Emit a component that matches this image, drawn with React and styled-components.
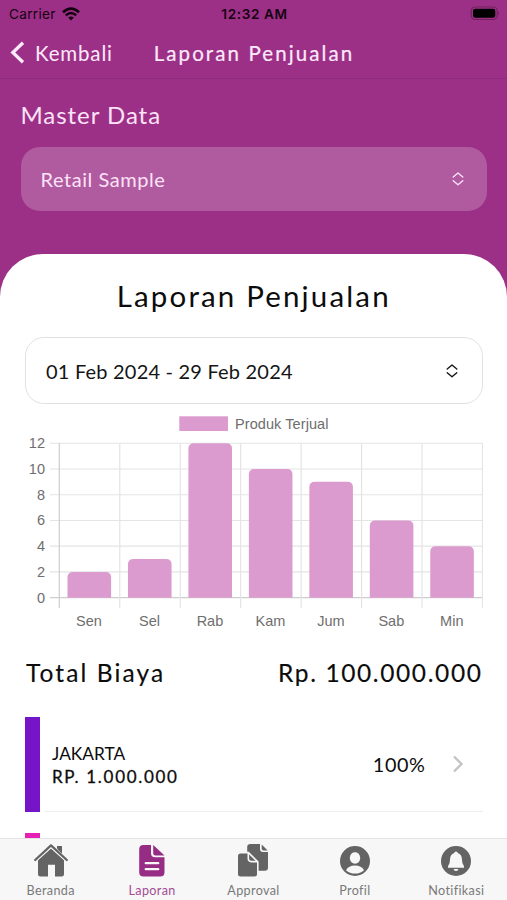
import React from "react";
import styled, { createGlobalStyle } from "styled-components";

const GlobalStyle = createGlobalStyle`
  * {
    box-sizing: border-box;
  }
  body {
    margin: 0;
    background: #9c3087;
    font-family: Lato, "Open Sans", sans-serif;
  }
`;

const Screen = styled.div`
  display: flex;
  flex-direction: column;
  width: 507px;
  height: 900px;
  overflow: hidden;
  background: #9c3087;
`;

const StatusBar = styled.div`
  display: grid;
  grid-template-columns: 1fr auto 1fr;
  align-items: center;
  height: 27px;
  padding: 0 7px 0 9px;
  font-family: Inter, sans-serif;
  font-size: 13.6px;
  color: #16020f;
`;

const Carrier = styled.div`
  display: flex;
  align-items: center;
  gap: 6px;
  letter-spacing: 0.3px;
`;

const Clock = styled.div`
  font-weight: 600;
  letter-spacing: 0.6px;
`;

const BatteryIcon = styled.svg`
  justify-self: end;
`;

const NavBar = styled.div`
  display: grid;
  grid-template-columns: 1fr auto 1fr;
  align-items: center;
  height: 52px;
  padding: 0 9px 0 10px;
  border-bottom: 1px solid #8e2b7b;
  color: #fde9fa;
`;

const BackButton = styled.div`
  display: flex;
  align-items: center;
  gap: 10px;
  font-size: 20.5px;
  letter-spacing: 0.85px;
`;

const NavTitle = styled.div`
  font-size: 20.5px;
  letter-spacing: 2.1px;
  -webkit-text-stroke: 0.2px currentColor;
`;

const MasterSection = styled.div`
  height: 174.5px;
  padding: 19px 20px 0 20.5px;
  color: #fde3f8;
`;

const SectionLabel = styled.div`
  height: 48.5px;
  line-height: 33px;
  font-size: 24px;
  letter-spacing: 0.95px;
`;

const Select = styled.div`
  display: flex;
  flex: none;
  align-items: center;
  justify-content: space-between;
  height: ${(p) => (p.$outlined ? "67px" : "64.5px")};
  padding: 0 ${(p) => (p.$outlined ? "23px" : "22px")} 0 20px;
  border-radius: 19px;
  border: ${(p) => (p.$outlined ? "1.5px solid #e1e1e1" : "0")};
  background: ${(p) => (p.$outlined ? "#fff" : "#b05a9f")};
  color: ${(p) => (p.$outlined ? "#151515" : "#fde3f8")};
  font-size: 20px;
  letter-spacing: ${(p) => (p.$outlined ? "0.2px" : "0.55px")};
`;

const Sheet = styled.div`
  display: flex;
  flex-direction: column;
  flex: 1;
  min-height: 0;
  overflow: hidden;
  padding: 0 24.5px 0 25px;
  border-radius: 43px 43px 0 0;
  background: #fff;
  color: #0c0c0c;
`;

const SheetTitle = styled.h1`
  flex: none;
  height: 83.5px;
  margin: 0;
  line-height: 84px;
  text-align: center;
  font-size: 29.5px;
  font-weight: 400;
  letter-spacing: 2.15px;
`;

const Chart = styled.svg`
  flex: none;
  display: block;
  font-family: "Liberation Sans", sans-serif;
  font-size: 14.5px;
  fill: #6e6e6e;
`;

const TotalRow = styled.div`
  display: flex;
  flex: none;
  justify-content: space-between;
  height: 73.5px;
  padding-left: 1px;
  line-height: 59px;
  font-size: 24.5px;
  letter-spacing: 1.6px;
  -webkit-text-stroke: 0.15px currentColor;
`;

const TotalLabel = styled.span`
  letter-spacing: 2.1px;
`;

const CostItem = styled.div`
  display: flex;
  flex: none;
  gap: 4px;
  height: 95.5px;
  margin-bottom: 21px;
`;

const CostBar = styled.div`
  width: 15px;
  background: ${(p) => p.$color};
`;

const CostBody = styled.div`
  display: flex;
  flex: 1;
  align-items: center;
  padding: 1px 19px 0 8px;
  border-bottom: 1.5px solid #eee;
`;

const CostText = styled.div`
  flex: 1;
  padding-top: 2px;
  font-size: 17.3px;
  line-height: 23px;
`;

const CostAmount = styled.div`
  font-size: 17px;
  letter-spacing: 1.7px;
  -webkit-text-stroke: 0.3px currentColor;
`;

const Percent = styled.div`
  margin-right: 26px;
  font-size: 19.8px;
  letter-spacing: 0.6px;
`;

const TabBar = styled.div`
  display: grid;
  flex: none;
  grid-template-columns: repeat(5, 1fr);
  height: 62px;
  border-top: 1px solid #e4e4e4;
  background: #f7f7f7;
`;

const Tab = styled.div`
  display: flex;
  flex-direction: column;
  align-items: center;
  padding-top: 3px;
  color: ${(p) => (p.$active ? "#972c84" : "#646464")};
`;

const TabLabel = styled.span`
  margin-top: 3.5px;
  line-height: 17px;
  font-size: 12.6px;
  letter-spacing: 0.35px;
  opacity: 0.85;
`;

const days = [
  { name: "Sen", value: 2 },
  { name: "Sel", value: 3 },
  { name: "Rab", value: 12 },
  { name: "Kam", value: 10 },
  { name: "Jum", value: 9 },
  { name: "Sab", value: 6 },
  { name: "Min", value: 4 },
];

const ticks = [0, 2, 4, 6, 8, 10, 12];
const CHART_LEFT = 34.3;
const CHART_RIGHT = 457.5;
const BASELINE = 193.7;
const UNIT = 12.87;
const STEP = (CHART_RIGHT - CHART_LEFT) / 7;

function barPath(index, value) {
  const x = CHART_LEFT + STEP * index + 8.2;
  const top = BASELINE - value * UNIT;
  const w = 43.6;
  const r = 5.5;
  return `M${x} ${BASELINE}V${top + r}q0 ${-r} ${r} ${-r}h${w - r * 2}q${r} 0 ${r} ${r}V${BASELINE}z`;
}

function SalesChart() {
  return (
    <Chart width="458" height="239" viewBox="0 0 458 239">
      <rect x="154.3" y="12.3" width="48.7" height="14.7" fill="#db9bce" />
      <text x="210" y="24.5" textLength="93.5">
        Produk Terjual
      </text>
      {ticks.map((tick) => {
        const y = BASELINE - tick * UNIT;
        return (
          <g key={tick}>
            <path
              d={`M25 ${y}H${CHART_RIGHT}`}
              stroke={tick === 0 ? "#cdcdcd" : "#e4e4e4"}
              strokeWidth="1.2"
            />
            <text x="20" y={y + 5} textAnchor="end">
              {tick}
            </text>
          </g>
        );
      })}
      {[0, 1, 2, 3, 4, 5, 6, 7].map((i) => (
        <path
          key={i}
          d={`M${CHART_LEFT + STEP * i} 39V204`}
          stroke={i === 0 ? "#cdcdcd" : "#e4e4e4"}
          strokeWidth="1.2"
        />
      ))}
      {days.map((day, i) => (
        <g key={day.name}>
          <path d={barPath(i, day.value)} fill="#db9bce" />
          <text x={CHART_LEFT + STEP * (i + 0.5) - 0.5} y="221.5" textAnchor="middle">
            {day.name}
          </text>
        </g>
      ))}
    </Chart>
  );
}

function WifiIcon() {
  return (
    <svg width="18" height="14" viewBox="0 0 18 14" fill="none" stroke="currentColor">
      <path d="M1 5.2Q9-2.1 17 5.2" strokeWidth="2.6" />
      <path d="M3.8 8.3Q9 3.6 14.2 8.3" strokeWidth="2.4" />
      <path d="M6.1 10.6Q9 8.3 11.9 10.6L9 13.5z" fill="currentColor" stroke="none" />
    </svg>
  );
}

function SelectorIcon() {
  return (
    <svg width="14" height="16" viewBox="0 0 14 16" fill="none" stroke="currentColor" strokeWidth="1.4" strokeLinecap="round" strokeLinejoin="round">
      <path d="M2.2 6L7 2l4.8 4M2.2 9.8L7 13.8l4.8-4" />
    </svg>
  );
}

function HomeIcon() {
  return (
    <svg width="36" height="36" viewBox="0 0 36 36" fill="currentColor">
      <path d="M24 4h5v10.5L24 10z" />
      <path d="M18 6.4l13 11.5v14.3q0 2.3-2.3 2.3H22V22.7h-7v11.8H7.3Q5 34.5 5 32.2V17.9z" />
      <path d="M2.2 18L18 3.4 33.8 18" fill="none" stroke="#f7f7f7" strokeWidth="4.2" />
      <path d="M24.6 4H29v7.6l-4.4-4z" />
      <path d="M2.2 18L18 3.4 33.8 18" fill="none" stroke="currentColor" strokeWidth="2.3" strokeLinecap="round" strokeLinejoin="round" />
    </svg>
  );
}

function ReportIcon() {
  return (
    <svg width="36" height="36" viewBox="0 0 36 36" fill="currentColor">
      <path d="M9.5 3H17v8.2q0 4 4 4h9.5v15q0 4.3-4.3 4.3H9.5q-4.3 0-4.3-4.3V7.3Q5.2 3 9.5 3z" />
      <path d="M19.2 3l11.3 10.5h-8.8q-2.5 0-2.5-2.5z" />
      <path d="M11.7 21.2h12.6M11.7 27.2h12.6" fill="none" stroke="#f7f7f7" strokeWidth="2.2" strokeLinecap="round" />
    </svg>
  );
}

function ApprovalIcon() {
  return (
    <svg width="36" height="36" viewBox="0 0 36 36" fill="currentColor">
      <path d="M15.5 2H25v5q0 3 3 3h5v15.5q0 3.3-3.3 3.3H15.5q-3.3 0-3.3-3.3V5.3Q12.2 2 15.5 2z" />
      <path d="M26.7 2.4l6 6h-4q-2 0-2-2z" />
      <path d="M5.5 10.6h8l9.3 9.3v12.2q0 3.3-3.3 3.3h-14q-3.3 0-3.3-3.3V13.9q0-3.3 3.3-3.3z" stroke="#f7f7f7" strokeWidth="1.6" />
      <path d="M13.3 10.8v5.8q0 3 3 3h6" fill="none" stroke="#f7f7f7" strokeWidth="1.6" />
    </svg>
  );
}

function ProfileIcon() {
  return (
    <svg width="36" height="36" viewBox="0 0 36 36" fill="currentColor">
      <circle cx="18" cy="19" r="15" />
      <rect x="12.9" y="10.2" width="10.2" height="11.5" rx="5.1" fill="#f7f7f7" />
      <path d="M9 28.2q2.5-4.6 9-4.6t9 4.6q-3.6 3.4-9 3.4t-9-3.4z" fill="#f7f7f7" />
    </svg>
  );
}

function BellIcon() {
  return (
    <svg width="36" height="36" viewBox="0 0 36 36" fill="currentColor">
      <circle cx="18" cy="19" r="15" />
      <path d="M18 9.4q1.6 0 1.8 1.5 4.1 1.3 4.1 6.2 0 4.7 2.1 7.1v1.6H10v-1.6q2.1-2.4 2.1-7.1 0-4.9 4.1-6.2.2-1.5 1.8-1.5zM15.5 27h5q-.4 2-2.5 2t-2.5-2z" fill="#f7f7f7" />
    </svg>
  );
}

const tabs = [
  { label: "Beranda", icon: HomeIcon },
  { label: "Laporan", icon: ReportIcon, active: true },
  { label: "Approval", icon: ApprovalIcon },
  { label: "Profil", icon: ProfileIcon },
  { label: "Notifikasi", icon: BellIcon },
];

export default function App() {
  return (
    <>
      <GlobalStyle />
      <Screen>
        <StatusBar>
          <Carrier>
            Carrier
            <WifiIcon />
          </Carrier>
          <Clock>12:32 AM</Clock>
          <BatteryIcon width="30" height="15" viewBox="0 0 30 15">
            <rect x="1.2" y="1" width="26" height="12.5" rx="4" fill="none" stroke="#74205f" strokeWidth="1.2" />
            <rect x="3" y="2.8" width="22.3" height="9" rx="2.3" fill="#000" />
            <path d="M28.3 5.2q1.8 2 0 4z" fill="#74205f" />
          </BatteryIcon>
        </StatusBar>
        <NavBar>
          <BackButton>
            <svg width="15" height="24" viewBox="0 0 15 24" fill="none" stroke="currentColor" strokeWidth="3.3">
              <path d="M13 1.7L2.8 11.5 13 21.3" />
            </svg>
            Kembali
          </BackButton>
          <NavTitle>Laporan Penjualan</NavTitle>
        </NavBar>
        <MasterSection>
          <SectionLabel>Master Data</SectionLabel>
          <Select>
            Retail Sample
            <SelectorIcon />
          </Select>
        </MasterSection>
        <Sheet>
          <SheetTitle>Laporan Penjualan</SheetTitle>
          <Select $outlined>
            01 Feb 2024 - 29 Feb 2024
            <SelectorIcon />
          </Select>
          <SalesChart />
          <TotalRow>
            <TotalLabel>Total Biaya</TotalLabel>
            <span>Rp. 100.000.000</span>
          </TotalRow>
          <CostItem>
            <CostBar $color="#7614c8" />
            <CostBody>
              <CostText>
                JAKARTA
                <CostAmount>RP. 1.000.000</CostAmount>
              </CostText>
              <Percent>100%</Percent>
              <svg width="12" height="18" viewBox="0 0 12 18" fill="none" stroke="#c4c4c4" strokeWidth="2.4">
                <path d="M2 1.5L9.5 9 2 16.5" />
              </svg>
            </CostBody>
          </CostItem>
          <CostItem>
            <CostBar $color="#e620b4" />
          </CostItem>
        </Sheet>
        <TabBar>
          {tabs.map(({ label, icon: Icon, active }) => (
            <Tab key={label} $active={active}>
              <Icon />
              <TabLabel>{label}</TabLabel>
            </Tab>
          ))}
        </TabBar>
      </Screen>
    </>
  );
}
